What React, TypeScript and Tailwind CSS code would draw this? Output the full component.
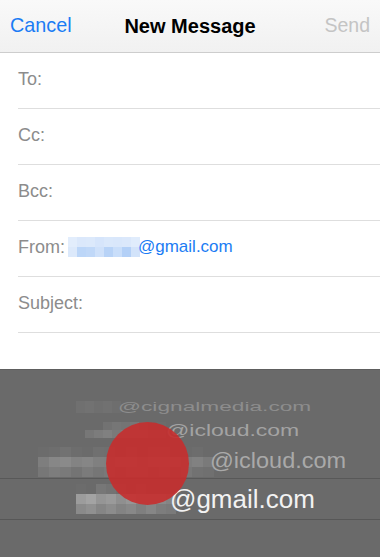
import React from 'react';

const font = { fontFamily: '"Liberation Sans", Arial, sans-serif' };

type PixelRow = string[];

// pixelated (blurred-out) part of an address
function Pixels({ rows, cell, height }: { rows: PixelRow[]; cell: number; height: number }) {
  return (
    <div className="flex flex-col shrink-0">
      {rows.map((row, i) => (
        <div key={i} className="flex">
          {row.map((c, j) => (
            <div key={j} style={{ width: cell, height, background: c }} />
          ))}
        </div>
      ))}
    </div>
  );
}

const fields = ['To:', 'Cc:', 'Bcc:'];

export default function App() {
  return (
    <div className="relative w-[380px] h-[557px] overflow-hidden bg-white" style={font}>
      {/* nav bar */}
      <div className="h-[53px] flex items-center justify-between px-[10px] bg-gradient-to-b from-[#f9f9f9] to-[#f1f1f1] border-b border-[#cdcdcd]">
        <span className="text-[19.8px] text-[#1b7cf4]">Cancel</span>
        <span className="text-[20px] font-bold text-black -ml-[16px]">New Message</span>
        <span className="text-[19.5px] text-[#c4c4c4]">Send</span>
      </div>

      {/* fields */}
      <div className="pl-[18px]">
        {fields.map((f) => (
          <div key={f} className="h-[56px] flex items-center border-b border-[#dedede] text-[18px] text-[#8c8c8c] pb-[3px]">
            {f}
          </div>
        ))}
        <div className="h-[56px] flex items-center border-b border-[#dedede] text-[18px] pb-[3px]">
          <span className="text-[#8c8c8c]">From:</span>
          <div className="ml-[3px]">
            <Pixels
              cell={9}
              height={10}
              rows={[
                ['#e2edfc', '#dbe8fb', '#dce9fb', '#d6e5fb', '#dae8fb', '#d9e7fb', '#dbe8fb', '#e0ecfc'],
                ['#dce9fb', '#bcd6f8', '#c0d8f8', '#cfe1fa', '#b8d3f7', '#c9defa', '#b3d0f7', '#d2e3fa'],
              ]}
            />
          </div>
          <span className="text-[#1b7cf4] text-[17px] -ml-[2px]">@gmail.com</span>
        </div>
        <div className="h-[56px] flex items-center border-b border-[#dedede] text-[18px] text-[#8c8c8c] pb-[3px]">
          Subject:
        </div>
      </div>

      {/* account picker */}
      <div className="absolute left-0 right-0 top-[369px] bottom-0 bg-[#6a6a6a] border-t border-[#5e5e5e]">
        <div className="h-[25px]" />
        <div className="h-[23px] flex items-center pl-[76px]">
          <Pixels cell={9} height={12} rows={[['#707070', '#727272', '#6f6f6f', '#717171', '#6e6e6e']]} />
          <span className="ml-[-3px] text-[22.7px] text-[#8d8d8d] scale-y-[0.55] origin-center inline-block leading-none">@cignalmedia.com</span>
        </div>
        <div className="h-[24px] flex items-center pl-[85px]">
          <Pixels
            cell={9}
            height={8}
            rows={[
              ['#6a6a6a', '#6a6a6a', '#727272', '#767676', '#747474', '#777777', '#6f6f6f', '#6a6a6a', '#6c6c6c'],
              ['#777777', '#7c7c7c', '#808080', '#7a7a7a', '#7e7e7e', '#797979', '#7b7b7b', '#747474', '#727272'],
            ]}
          />
          <span className="text-[23px] text-[#a3a3a3] scale-y-[0.75] inline-block leading-none">@icloud.com</span>
        </div>
        <div className="h-[36px] flex items-center pl-[38px] pt-[4px]">
          <Pixels
            cell={11}
            height={10}
            rows={[
              ['#6c6c6c', '#6e6e6e', '#727272', '#6d6d6d', '#6b6b6b', '#707070', '#6f6f6f', '#6c6c6c', '#6e6e6e', '#6b6b6b', '#6d6d6d', '#6e6e6e', '#6c6c6c', '#6b6b6b', '#6d6d6d', '#6a6a6a'],
              ['#7e7e7e', '#878787', '#8a8a8a', '#838383', '#868686', '#808080', '#7f7f7f', '#858585', '#838383', '#7b7b7b', '#858585', '#828282', '#848484', '#7d7d7d', '#818181', '#7a7a7a'],
              ['#777777', '#7d7d7d', '#7a7a7a', '#747474', '#7b7b7b', '#767676', '#797979', '#737373', '#7a7a7a', '#787878', '#727272', '#777777', '#747474', '#787878', '#727272', '#707070'],
            ]}
          />
          <span className="text-[23.5px] text-[#a9a9a9] scale-y-[0.92] inline-block leading-none -ml-[4px]">@icloud.com</span>
        </div>
        <div className="h-px bg-[#585858]" />
        <div className="h-[40px] flex items-center pl-[76px]">
          <Pixels
            cell={10}
            height={10}
            rows={[
              ['#6c6c6c', '#6a6a6a', '#777777', '#737373', '#6e6e6e', '#6b6b6b', '#6d6d6d', '#6a6a6a', '#6b6b6b', '#6a6a6a'],
              ['#9c9c9c', '#a3a3a3', '#959595', '#9a9a9a', '#8f8f8f', '#969696', '#8c8c8c', '#939393', '#8a8a8a', '#848484'],
              ['#8a8a8a', '#909090', '#858585', '#8c8c8c', '#838383', '#888888', '#7f7f7f', '#868686', '#7d7d7d', '#7a7a7a'],
            ]}
          />
          <span className="text-[26px] text-[#f2f2f2] leading-none -ml-[6px]">@gmail.com</span>
        </div>
        <div className="h-px bg-[#575757]" />
      </div>

      {/* touch indicator */}
      <div className="absolute left-[106px] top-[422px] w-[83px] h-[83px] rounded-full bg-[#c62e2e]/90" />
    </div>
  );
}
